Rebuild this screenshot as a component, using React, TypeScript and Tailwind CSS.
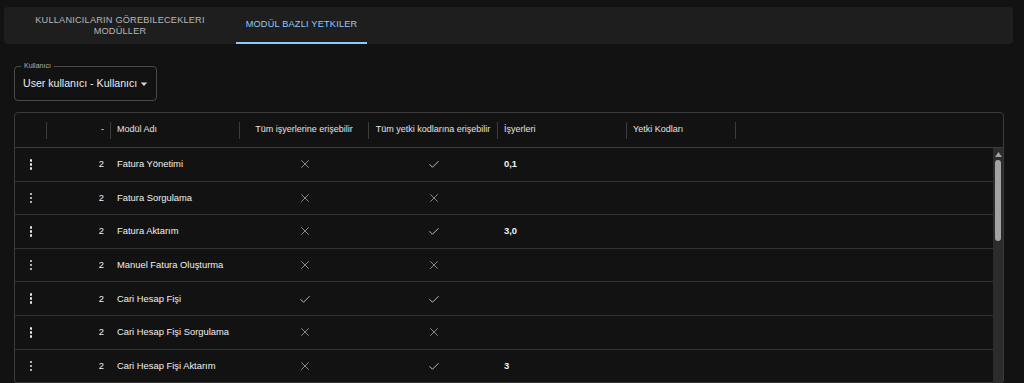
import React from "react";

type Row = { name: string; all: boolean; codes: boolean; places: string };

const rows: Row[] = [
  { name: "Fatura Yönetimi", all: false, codes: true, places: "0,1" },
  { name: "Fatura Sorgulama", all: false, codes: false, places: "" },
  { name: "Fatura Aktarım", all: false, codes: true, places: "3,0" },
  { name: "Manuel Fatura Oluşturma", all: false, codes: false, places: "" },
  { name: "Cari Hesap Fişi", all: true, codes: true, places: "" },
  { name: "Cari Hesap Fişi Sorgulama", all: false, codes: false, places: "" },
  { name: "Cari Hesap Fişi Aktarım", all: false, codes: true, places: "3" },
];

const Check = () => (
  <svg width="12" height="12" viewBox="0 0 24 24" className="text-[#bdbdbd]">
    <path d="M3 12.5 9 18.5 21 6.5" fill="none" stroke="currentColor" strokeWidth="2" />
  </svg>
);

const Cross = () => (
  <svg width="10" height="10" viewBox="0 0 24 24" className="text-[#929292]">
    <path d="M3 3 21 21M21 3 3 21" fill="none" stroke="currentColor" strokeWidth="2.2" />
  </svg>
);

const Kebab = () => (
  <div className="flex flex-col items-center gap-[1.5px]">
    <span className="w-[2.5px] h-[2.5px] rounded-full bg-[#e6e6e6]" />
    <span className="w-[2.5px] h-[2.5px] rounded-full bg-[#e6e6e6]" />
    <span className="w-[2.5px] h-[2.5px] rounded-full bg-[#e6e6e6]" />
  </div>
);

const Sep = () => <span className="w-px h-[17px] bg-[#3c3c3c]" />;

export default function App() {
  return (
    <div
      className="w-[1024px] h-[383px] overflow-hidden bg-[#121212] text-[#e8e8e8] pt-[7px]"
      style={{ fontFamily: '"Liberation Sans", Arial, sans-serif' }}
    >
      {/* Tabs */}
      <div className="mx-[4px] w-[1009px] h-[37px] bg-[#1e1e1e] rounded flex">
        <div className="w-[232px] flex items-center justify-center text-center text-[9.2px] leading-[11px] font-medium tracking-[0.2px] text-[#b8b8b8] uppercase">
          KULLANICILARIN GÖREBILECEKLERI
          <br />
          MODÜLLER
        </div>
        <div className="w-[131px] flex items-center justify-center text-[9.2px] tracking-[0.2px] text-[#90caf9] border-b-2 border-[#90caf9]">
          MODÜL BAZLI YETKILER
        </div>
      </div>

      {/* Select */}
      <div className="ml-[14px] mt-[22px] relative w-[143px] h-[35px] border border-[#4a4a4a] rounded flex items-center pl-[8px] pr-[8px]">
        <span className="absolute -top-[6px] left-[6px] px-[3px] bg-[#121212] text-[7px] leading-[10px] text-[#b0b0b0]">
          Kullanıcı
        </span>
        <span className="text-[10.6px] text-[#ececec] flex-1 whitespace-nowrap">User kullanıcı - Kullanıcı</span>
        <svg width="8" height="8" viewBox="0 0 10 10" className="text-[#d8d8d8]">
          <path d="M1 3h8L5 7.5z" fill="currentColor" />
        </svg>
      </div>

      {/* Table */}
      <div className="ml-[14px] mt-[11px] w-[990px] border border-[#3a3a3a] rounded">
        <div className="h-[35px] flex items-center border-b border-[#3a3a3a] text-[9px] text-[#e4e4e4]">
          <div className="w-[32px] h-full flex items-center justify-end">
            <Sep />
          </div>
          <div className="w-[64px] h-full flex items-center justify-end gap-[6px]">
            <span>-</span>
            <Sep />
          </div>
          <div className="w-[129px] h-full flex items-center">
            <span className="flex-1 pl-[6px]">Modül Adı</span>
            <Sep />
          </div>
          <div className="w-[129px] h-full flex items-center">
            <span className="flex-1 text-center whitespace-nowrap">Tüm işyerlerine erişebilir</span>
            <Sep />
          </div>
          <div className="w-[129px] h-full flex items-center">
            <span className="flex-1 text-center whitespace-nowrap">Tüm yetki kodlarına erişebilir</span>
            <Sep />
          </div>
          <div className="w-[129px] h-full flex items-center">
            <span className="flex-1 pl-[6px]">İşyerleri</span>
            <Sep />
          </div>
          <div className="w-[109px] h-full flex items-center">
            <span className="flex-1 pl-[6px]">Yetki Kodları</span>
            <Sep />
          </div>
        </div>

        <div className="flex">
          <div className="w-[978px]">
            {rows.map((r, i) => (
              <div key={i} className="h-[33.6px] flex items-center border-b border-[#333333] text-[9.4px] text-[#f0f0f0]">
                <div className="w-[32px] flex justify-center">
                  <Kebab />
                </div>
                <div className="w-[64px] text-right pr-[7px]">2</div>
                <div className="w-[129px] pl-[6px] whitespace-nowrap">{r.name}</div>
                <div className="w-[129px] flex justify-center">{r.all ? <Check /> : <Cross />}</div>
                <div className="w-[129px] flex justify-center">{r.codes ? <Check /> : <Cross />}</div>
                <div className="w-[129px] pl-[6px] font-bold">{r.places}</div>
                <div className="w-[109px]" />
              </div>
            ))}
          </div>
          {/* Scrollbar */}
          <div className="w-[10px] bg-[#2c2c2c] flex flex-col items-center pt-[4px]">
            <svg width="7" height="5" viewBox="0 0 7 5" className="text-[#a0a0a0]">
              <path d="M3.5 0 7 5H0z" fill="currentColor" />
            </svg>
            <div className="mt-[3px] w-[6px] h-[81px] rounded-full bg-[#a3a3a3]" />
          </div>
        </div>
      </div>
    </div>
  );
}
